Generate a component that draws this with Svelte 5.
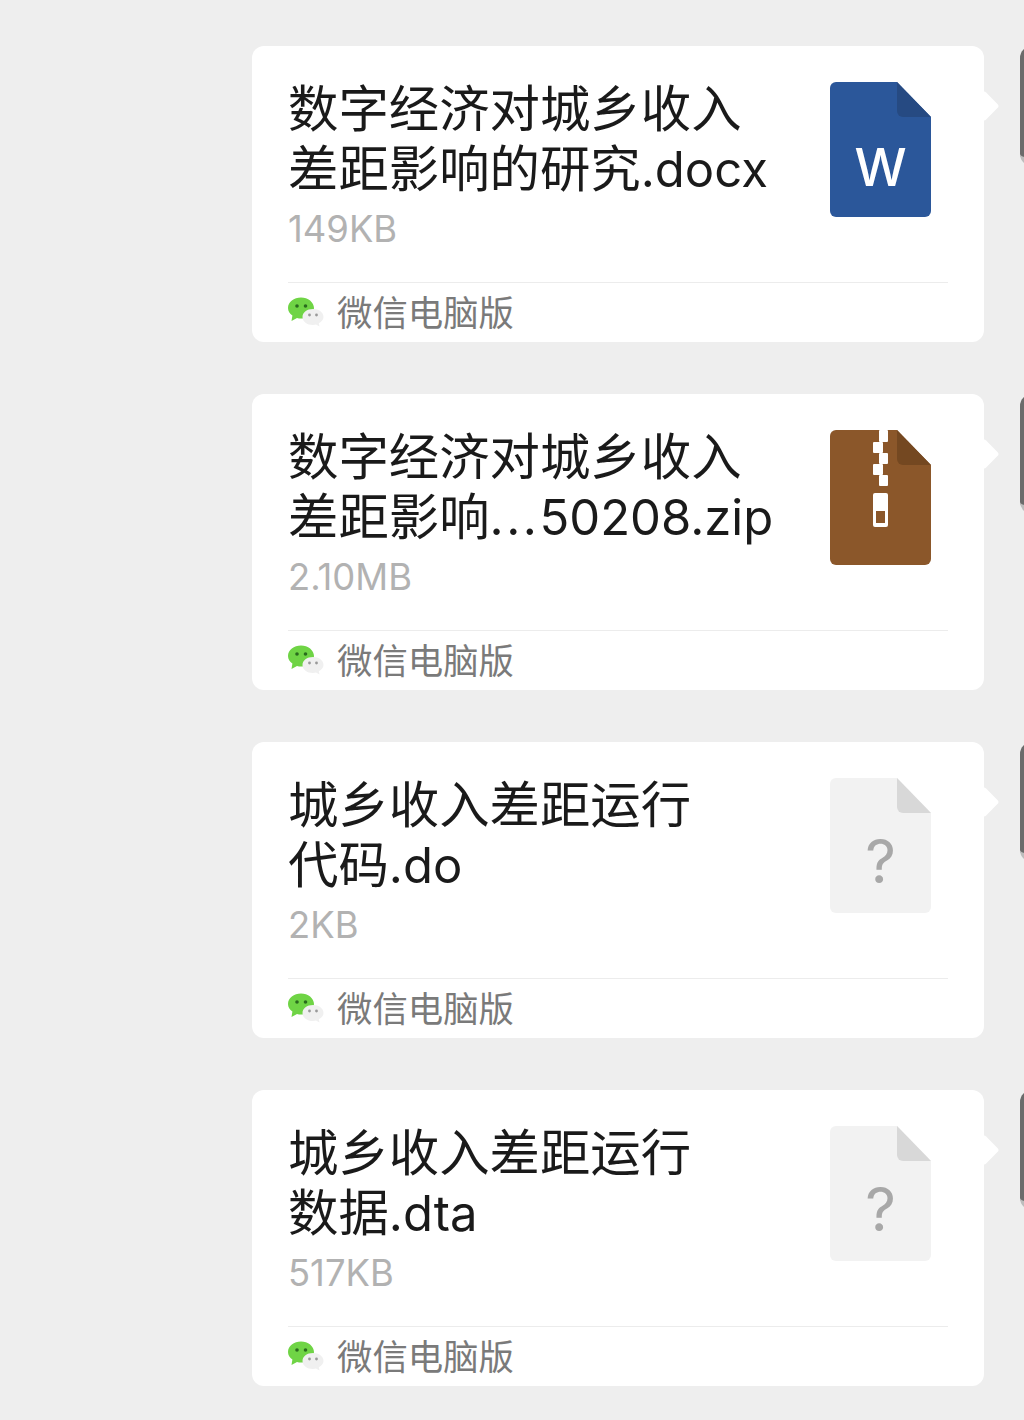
<script>
  const files = [
    { title: '数字经济对城乡收入', stem: '差距影响的研究', ext: '.docx', size: '149KB', kind: 'word' },
    { title: '数字经济对城乡收入', stem: '差距影响', dots: '...', ext: '50208.zip', size: '2.10MB', kind: 'zip' },
    { title: '城乡收入差距运行', stem: '代码', ext: '.do', size: '2KB', kind: 'unknown' },
    { title: '城乡收入差距运行', stem: '数据', ext: '.dta', size: '517KB', kind: 'unknown' },
  ];

  const sheet = 'M6 0H67L101 35V129a6 6 0 0 1-6 6H6a6 6 0 0 1-6-6V6a6 6 0 0 1 6-6Z';
  const fold = 'M67 0L101 35H73a6 6 0 0 1-6-6Z';
  const colors = {
    word: ['#2b579a', '#264a82'],
    zip: ['#8b572a', '#744821'],
    unknown: ['#f2f2f2', '#d8d8d8'],
  };
  // zipper teeth alternate left and right of the centre line
  const teeth = [
    [49, 0, 9, 12],
    [43, 12, 10, 11],
    [49, 23, 9, 11],
    [43, 34, 10, 11],
    [49, 45, 9, 11],
  ];
</script>

<div class="chat">
  {#each files as file}
    <div class="row">
      <div class="bubble">
        <div class="body">
          <div class="info">
            <div class="name">
              <div>{file.title}</div>
              <div>{file.stem}{#if file.dots}<span class="dots">{file.dots}</span>{/if}<span class="ext">{file.ext}</span></div>
            </div>
            <div class="size">{file.size}</div>
          </div>
          <svg class="file-icon" width="101" height="135" viewBox="0 0 101 135">
            <path d={sheet} fill={colors[file.kind][0]} />
            <path d={fold} fill={colors[file.kind][1]} />
            {#if file.kind === 'word'}
              <text x="50.5" y="104" text-anchor="middle" class="glyph-w">W</text>
            {:else if file.kind === 'zip'}
              {#each teeth as [x, y, w, h]}
                <rect {x} {y} width={w} height={h} rx="1" fill="#fff" />
              {/each}
              <rect x="43" y="63" width="15" height="34" rx="2" fill="#fff" />
              <rect x="46" y="81" width="9" height="12" fill="#8b572a" />
            {:else}
              <text x="50.5" y="104.500" text-anchor="middle" class="glyph-q">?</text>
            {/if}
          </svg>
        </div>
        <div class="source">
          <svg class="source-icon" width="36" height="32" viewBox="0 0 36 32">
            <path
              d="M13 0.500C6 0.500 0 5 0 11c0 3 1.700 5.700 4.400 7.500L3.500 24l5.500-3c1.300.4 2.700.6 4 .6 7 0 13-4.800 13-10.600S20 0.500 13 0.500Z"
              fill="#6fd445"
            />
            <circle cx="9" cy="9" r="1.800" fill="#2a6b1e" />
            <circle cx="17.500" cy="9" r="1.800" fill="#2a6b1e" />
            <path
              d="M25 12c-6 0-10.500 3.500-10.500 8s4.500 8 10.500 8c1 0 2-.1 3-.4l3.500 2-.7-3.300c2.800-1.500 4.700-3.700 4.700-6.300 0-4.500-4.500-8-10.500-8Z"
              fill="#f0f0f0"
            />
            <circle cx="21.500" cy="18" r="1.400" fill="#999" />
            <circle cx="28.500" cy="18" r="1.400" fill="#999" />
          </svg>
          <span>微信电脑版</span>
        </div>
        <i class="tail"></i>
      </div>
      <div class="avatar"></div>
    </div>
  {/each}
</div>

<style>
  :global(body) {
    background: #eeeeee;
  }

  .chat {
    height: 1420px;
    box-sizing: border-box;
    padding: 46px 0 0 252px;
    display: flex;
    flex-direction: column;
    gap: 52px;
    overflow: hidden;
    font-family: Inter, 'Noto Sans CJK SC', sans-serif;
  }

  .row {
    display: flex;
    align-items: flex-start;
    gap: 36px;
  }

  .bubble {
    position: relative;
    flex: none;
    width: 732px;
    height: 296px;
    box-sizing: border-box;
    padding: 33px 36px 0 36px;
    background: #fff;
    border-radius: 12px;
  }

  .tail {
    position: absolute;
    right: -11px;
    top: 49px;
    width: 22px;
    height: 22px;
    background: #fff;
    border-radius: 3px;
    transform: rotate(45deg);
  }

  .body {
    display: flex;
    justify-content: space-between;
    height: 203px;
  }

  .info {
    min-width: 0;
  }

  .name {
    font-size: 50.400px;
    line-height: 60px;
    color: #1a1a1a;
    white-space: nowrap;
  }

  .ext {
    font-size: 49px;
  }

  .dots {
    font-size: 49px;
    letter-spacing: 2.500px;
  }

  .size {
    margin-top: 5px;
    font-size: 36.400px;
    line-height: 48px;
    color: #b2b2b2;
  }

  .file-icon {
    flex: none;
    margin: 3px 17px 0 0;
  }

  .glyph-w {
    font: 500 52px Inter, sans-serif;
    fill: #fff;
  }

  .glyph-q {
    font: 400 60px Inter, sans-serif;
    fill: #a8a8a8;
  }

  .source {
    display: flex;
    align-items: center;
    gap: 13px;
    height: 60px;
    padding-bottom: 4px;
    box-sizing: border-box;
    border-top: 1px solid #ececec;
    font-size: 35.400px;
    color: #7a7a7a;
  }

  .source-icon {
    margin-top: 4px;
  }

  .avatar {
    flex: none;
    width: 60px;
    height: 120px;
    background: #6b6b6b;
    border-bottom: 8px solid #bdbdbd;
    border-radius: 12px 0 0 12px;
    box-sizing: border-box;
  }
</style>
